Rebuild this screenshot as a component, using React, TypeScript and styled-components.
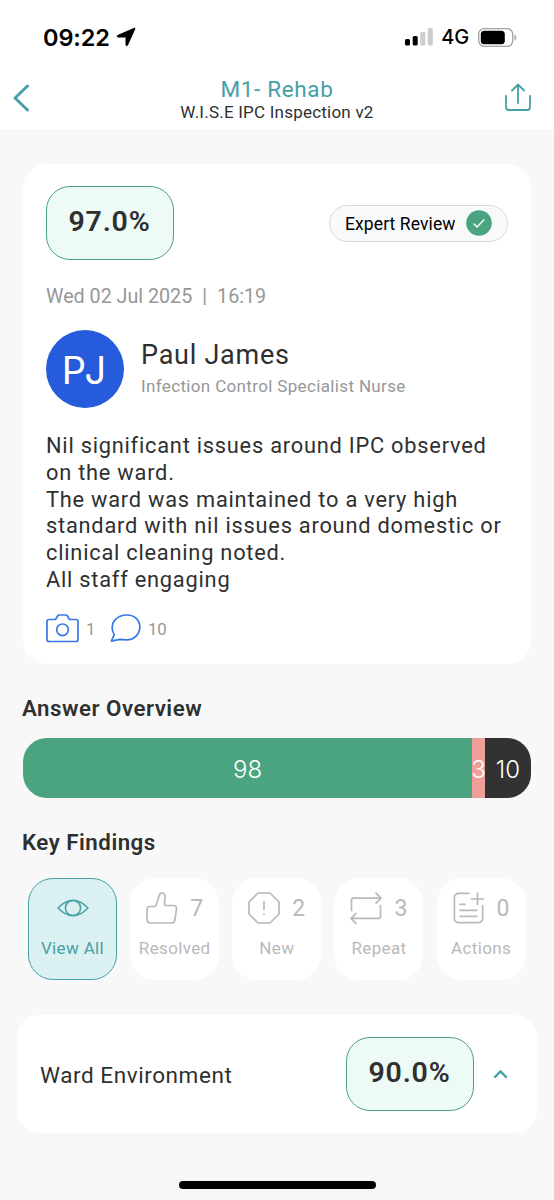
import React from "react";
import styled, { createGlobalStyle } from "styled-components";

const GlobalStyle = createGlobalStyle`
  * { box-sizing: border-box; }
  body { margin: 0; background: #f8f8f8; font-family: Roboto, "Liberation Sans", sans-serif; color: #2e3030; }
`;

const teal = "#46a0a8";
const green = "#4aa47f";
const systemFont = `Inter, "Liberation Sans", sans-serif`;

const Screen = styled.div`
  width: 554px;
  height: 1200px;
  display: flex;
  flex-direction: column;
  background: #f8f8f8;
  overflow: hidden;
  white-space: nowrap;
`;

const StatusBar = styled.div`
  height: 67px;
  padding: 7px 37px 0 43px;
  display: flex;
  align-items: center;
  justify-content: space-between;
  background: #fff;
  color: #000;
  font-family: ${systemFont};
`;

const StatusGroup = styled.div`
  display: flex;
  align-items: center;
`;

const Clock = styled.span`
  font-size: 23.5px;
  font-weight: 600;
  letter-spacing: -0.1px;
  margin-right: 6px;
`;

const Network = styled.span`
  font-size: 20px;
  font-weight: 500;
  letter-spacing: -0.2px;
  margin: 0 9px 0 8px;
`;

const Header = styled.header`
  height: 62px;
  padding: 0 21px 0 12px;
  display: grid;
  grid-template-columns: 30px 1fr 30px;
  background: #fff;
`;

const Titles = styled.div`
  text-align: center;
  padding: 8px 0 0 9px;
`;

const Title = styled.h1`
  margin: 0;
  font-size: 22.5px;
  line-height: 28px;
  font-weight: 400;
  letter-spacing: 0.65px;
  color: ${teal};
`;

const Subtitle = styled.div`
  margin-top: -1px;
  font-size: 17px;
  line-height: 20px;
  letter-spacing: 0.22px;
`;

const BackIcon = styled.svg`
  margin-top: 16px;
`;

const ShareIcon = styled.svg`
  margin-top: 15px;
`;

const ReviewCard = styled.section`
  width: 508px;
  height: 500px;
  margin: 35px 0 0 23px;
  padding: 22px 23px 0;
  border-radius: 24px;
  background: #fff;
`;

const CardTop = styled.div`
  display: flex;
  align-items: center;
  justify-content: space-between;
`;

const Score = styled.div`
  width: 128px;
  height: 74px;
  padding: 0 1px 4px 0;
  display: flex;
  align-items: center;
  justify-content: center;
  border: 1.4px solid ${green};
  border-radius: 24px;
  background: #eefaf6;
  font-size: 28.5px;
  font-weight: 600;
  letter-spacing: 0.8px;
`;

const ExpertPill = styled.div`
  width: 179px;
  height: 37px;
  padding: 0 15px 0 15px;
  display: flex;
  align-items: center;
  justify-content: space-between;
  border: 1.4px solid #d7d9df;
  border-radius: 19px;
  background: #f8f9fb;
  color: #000;
  font-size: 17.5px;
  line-height: 24px;
  letter-spacing: 0.1px;
`;

const PillText = styled.span`
  padding-top: 2px;
`;

const DateLine = styled.div`
  margin-top: 25px;
  display: flex;
  gap: 10px;
  font-size: 19.7px;
  line-height: 24px;
  color: #979797;
`;

const Person = styled.div`
  margin-top: 21px;
  display: flex;
  gap: 17px;
`;

const Avatar = styled.div`
  width: 78px;
  height: 78px;
  padding-top: 1px;
  display: flex;
  align-items: center;
  justify-content: center;
  border-radius: 50%;
  background: #265bdc;
  color: #fff;
  font-family: ${systemFont};
  font-size: 38px;
  font-weight: 400;
  letter-spacing: 2px;
`;

const Name = styled.div`
  padding-top: 8px;
  font-size: 27px;
  line-height: 34px;
  letter-spacing: 0.75px;
`;

const Role = styled.div`
  margin-top: 4px;
  font-size: 17px;
  line-height: 20px;
  letter-spacing: 0.35px;
  color: #979797;
`;

const Comment = styled.p`
  margin: 25px 0 0;
  font-size: 21.8px;
  line-height: 26.8px;
  letter-spacing: 0.77px;
  white-space: pre;
`;

const Attachments = styled.div`
  margin-top: 20px;
  display: flex;
  align-items: center;
  color: #979797;
  font-size: 16.7px;
`;

const AttachmentCount = styled.span<{ $gap: number }>`
  margin: 2px ${(p) => p.$gap}px 0 7px;
`;

const SectionTitle = styled.h2<{ $top: number }>`
  margin: ${(p) => p.$top}px 0 0 22px;
  font-size: 22.3px;
  line-height: 28px;
  font-weight: 600;
  letter-spacing: 0.5px;
`;

const AnswerBar = styled.div`
  width: 508px;
  height: 60px;
  margin: 16px 0 0 23px;
  display: flex;
  flex: none;
  border-radius: 24px;
  overflow: hidden;
  color: #fff;
  font-family: ${systemFont};
  font-size: 24px;
  font-weight: 300;
`;

const Segment = styled.div<{ $width: number; $color: string }>`
  width: ${(p) => p.$width}px;
  padding-top: 2px;
  display: flex;
  align-items: center;
  justify-content: center;
  background: ${(p) => p.$color};
`;

const Filters = styled.div`
  margin: 22px 0 0 28px;
  display: flex;
  gap: 13.15px;
`;

const FilterTile = styled.button<{ $active?: boolean }>`
  width: 89px;
  height: 102px;
  padding: 0 0 8px;
  display: flex;
  flex-direction: column;
  align-items: center;
  border: ${(p) => (p.$active ? `1.4px solid ${teal}` : "none")};
  padding-top: ${(p) => (p.$active ? "12px" : "13px")};
  border-radius: 25px;
  background: ${(p) => (p.$active ? "#dbf0f1" : "#fff")};
  color: ${(p) => (p.$active ? teal : "#b9b9b9")};
  font-family: inherit;
`;

const FilterTop = styled.div`
  height: 34px;
  display: flex;
  align-items: center;
  gap: 12px;
  font-size: 23px;
`;

const FilterLabel = styled.div`
  margin-top: 13px;
  font-size: 17px;
  line-height: 20px;
  letter-spacing: 0.35px;
`;

const AreaCard = styled.section`
  width: 520px;
  height: 118px;
  margin: 35px 0 0 17px;
  padding: 0 29px 0 23px;
  display: flex;
  flex: none;
  align-items: center;
  border-radius: 22px;
  background: #fff;
`;

const AreaName = styled.div`
  flex: 1;
  padding-top: 1px;
  font-size: 22.5px;
  letter-spacing: 0.57px;
`;

const Chevron = styled.svg`
  margin-left: 19px;
`;

const HomeIndicator = styled.div`
  width: 197px;
  height: 8px;
  margin: 48px 0 0 179px;
  border-radius: 4px;
  background: #000;
`;

const line = {
  fill: "none",
  stroke: "currentColor",
  strokeWidth: 1.7,
  strokeLinecap: "round" as const,
  strokeLinejoin: "round" as const,
};

const ResolvedIcon = () => (
  <svg width="32" height="32" viewBox="0 0 32 32" {...line}>
    <path d="M4 14.5H8.2Q9.6 14.5 10.1 13.2L13 4.2C13.8 1.5 15 .8 16.3 1C18.6 1.3 19.2 3.2 19 5.2L18.4 11.5Q18.2 13.5 20 13.5H27.5C29.7 13.5 30.8 14.8 30.5 17L28.8 28C28.5 30.2 27.2 31 25.2 31H5C2.4 31 1 29.6 1 27V17.5C1 15.5 2 14.5 4 14.5Z" />
  </svg>
);

const NewIcon = () => (
  <svg width="32" height="32" viewBox="0 0 32 32" {...line}>
    <path d="M10 1H22L31 10V22L22 31H10L1 22V10Z" />
    <path d="M16 9.5V17.5M16 22.2V22.4" />
  </svg>
);

const RepeatIcon = () => (
  <svg width="32" height="32" viewBox="0 0 32 32" {...line}>
    <path d="M1.5 18.5V8C1.5 6.7 2.2 6.2 3.4 6.2H31M26 1.2L31 6.2L26 11.2" />
    <path d="M30.5 13.5V24.5C30.5 25.8 29.8 26.3 28.6 26.3H1M6 21.3L1 26.3L6 31.3" />
  </svg>
);

const ActionsIcon = () => (
  <svg width="32" height="32" viewBox="0 0 32 32" {...line}>
    <path d="M16 1.4H6Q1.4 1.4 1.4 6V26Q1.4 30.6 6 30.6H25Q29.6 30.6 29.6 26V13.5" />
    <path d="M24.5 1V12.5M18.5 7H30.5M7 12.3H12M7 18.3H24M7 24.3H24" />
  </svg>
);

const filters = [
  { label: "Resolved", count: 7, Icon: ResolvedIcon },
  { label: "New", count: 2, Icon: NewIcon },
  { label: "Repeat", count: 3, Icon: RepeatIcon },
  { label: "Actions", count: 0, Icon: ActionsIcon },
];

const comment = `Nil significant issues around IPC observed
on the ward.
The ward was maintained to a very high
standard with nil issues around domestic or
clinical cleaning noted.
All staff engaging`;

export default function App() {
  return (
    <Screen>
      <GlobalStyle />
      <StatusBar>
        <StatusGroup>
          <Clock>09:22</Clock>
          <svg width="20" height="20" viewBox="0 0 20 20">
            <path d="M18.4 1.2L1.5 8.6Q.6 9.5 1.8 10H9.5Q10 10 10 10.5V18Q10.6 19.4 11.5 18.2L18.9 1.7Q19 1 18.4 1.2Z" fill="#000" stroke="#000" strokeLinejoin="round" />
          </svg>
        </StatusGroup>
        <StatusGroup>
          <svg width="28" height="18" viewBox="0 0 28 18">
            <rect x="0" y="11" width="5" height="6.5" rx="1.5" />
            <rect x="7.7" y="8" width="5" height="9.5" rx="1.5" />
            <rect x="15.3" y="4" width="5" height="13.5" rx="1.5" fill="#cdcdcd" />
            <rect x="22.8" y="0" width="5" height="17.5" rx="1.5" fill="#cdcdcd" />
          </svg>
          <Network>4G</Network>
          <svg width="39" height="19" viewBox="0 0 39 19">
            <rect x=".7" y=".7" width="34" height="17.6" rx="5.5" fill="none" stroke="#a2a2a2" strokeWidth="1.3" />
            <rect x="2.8" y="2.8" width="24" height="13.4" rx="3.5" />
            <path d="M36.5 6.5C38.8 7.3 38.8 11.7 36.5 12.5Z" fill="#a2a2a2" />
          </svg>
        </StatusGroup>
      </StatusBar>

      <Header>
        <BackIcon width="19" height="30" viewBox="0 0 19 30" fill="none" stroke={teal} strokeWidth="3" strokeLinecap="round" strokeLinejoin="round">
          <path d="M15.5 3L3 15L15.5 27" />
        </BackIcon>
        <Titles>
          <Title>M1- Rehab</Title>
          <Subtitle>W.I.S.E IPC Inspection v2</Subtitle>
        </Titles>
        <ShareIcon width="30" height="30" viewBox="0 0 30 30" fill="none" stroke={teal} strokeWidth="1.8" strokeLinecap="round" strokeLinejoin="round">
          <path d="M3 14V25Q3 28 6 28H24Q27 28 27 25V14M15 21V2.5M9 8.5L15 2.5L21 8.5" />
        </ShareIcon>
      </Header>

      <ReviewCard>
        <CardTop>
          <Score>97.0%</Score>
          <ExpertPill>
            <PillText>Expert Review</PillText>
            <svg width="26" height="26" viewBox="0 0 26 26">
              <circle cx="13" cy="13" r="12.8" fill={green} />
              <path d="M8 14L11 17L18 9.7" fill="none" stroke="#fff" strokeWidth="1.4" strokeLinecap="round" strokeLinejoin="round" />
            </svg>
          </ExpertPill>
        </CardTop>
        <DateLine>
          <span>Wed 02 Jul 2025</span>
          <span>|</span>
          <span>16:19</span>
        </DateLine>
        <Person>
          <Avatar>PJ</Avatar>
          <div>
            <Name>Paul James</Name>
            <Role>Infection Control Specialist Nurse</Role>
          </div>
        </Person>
        <Comment>{comment}</Comment>
        <Attachments>
          <svg width="33" height="29" viewBox="0 0 33 29" fill="none" stroke="#3877e8" strokeWidth="1.7" strokeLinejoin="round">
            <path d="M3 5.5H8.5Q9.5 5.5 10 4.7L11.7 1.8Q12.2 1 13.2 1H19.8Q20.8 1 21.3 1.8L23 4.7Q23.5 5.5 24.5 5.5H30Q32 5.5 32 7.5V25.5Q32 27.5 30 27.5H3Q1 27.5 1 25.5V7.5Q1 5.5 3 5.5Z" />
            <circle cx="16.5" cy="15.8" r="5.8" />
          </svg>
          <AttachmentCount $gap={14.5}>1</AttachmentCount>
          <svg width="31" height="29" viewBox="0 0 31 29" fill="none" stroke="#3877e8" strokeWidth="1.7" strokeLinejoin="round">
            <path d="M1.4 27.2L4.2 20.6C1.4 16.2 1.3 10.2 5 5.9C8.3 2.2 12.6 1 17 1C24.5 1 29.8 6.2 29.8 13C29.8 20 24.3 25.8 16.5 25.8C14 25.8 12 25.8 10 25.4Z" />
          </svg>
          <AttachmentCount $gap={0}>10</AttachmentCount>
        </Attachments>
      </ReviewCard>

      <SectionTitle $top={30}>Answer Overview</SectionTitle>
      <AnswerBar>
        <Segment $width={449} $color={green}>98</Segment>
        <Segment $width={13} $color="#ef9e99">3</Segment>
        <Segment $width={46} $color="#323232">10</Segment>
      </AnswerBar>

      <SectionTitle $top={30}>Key Findings</SectionTitle>
      <Filters>
        <FilterTile $active>
          <FilterTop>
            <svg width="32" height="18" viewBox="0 0 32 18" {...line} strokeWidth={1.5}>
              <path d="M1 9Q16-6.5 31 9Q16 24.5 1 9Z" />
              <circle cx="16" cy="9" r="7.6" />
            </svg>
          </FilterTop>
          <FilterLabel>View All</FilterLabel>
        </FilterTile>
        {filters.map(({ label, count, Icon }) => (
          <FilterTile key={label}>
            <FilterTop>
              <Icon />
              <span>{count}</span>
            </FilterTop>
            <FilterLabel>{label}</FilterLabel>
          </FilterTile>
        ))}
      </Filters>

      <AreaCard>
        <AreaName>Ward Environment</AreaName>
        <Score>90.0%</Score>
        <Chevron width="15" height="10" viewBox="0 0 15 10" fill="none" stroke={teal} strokeWidth="2.4" strokeLinecap="round" strokeLinejoin="round">
          <path d="M2 8L7.5 2.3L13 8" />
        </Chevron>
      </AreaCard>
      <HomeIndicator />
    </Screen>
  );
}
